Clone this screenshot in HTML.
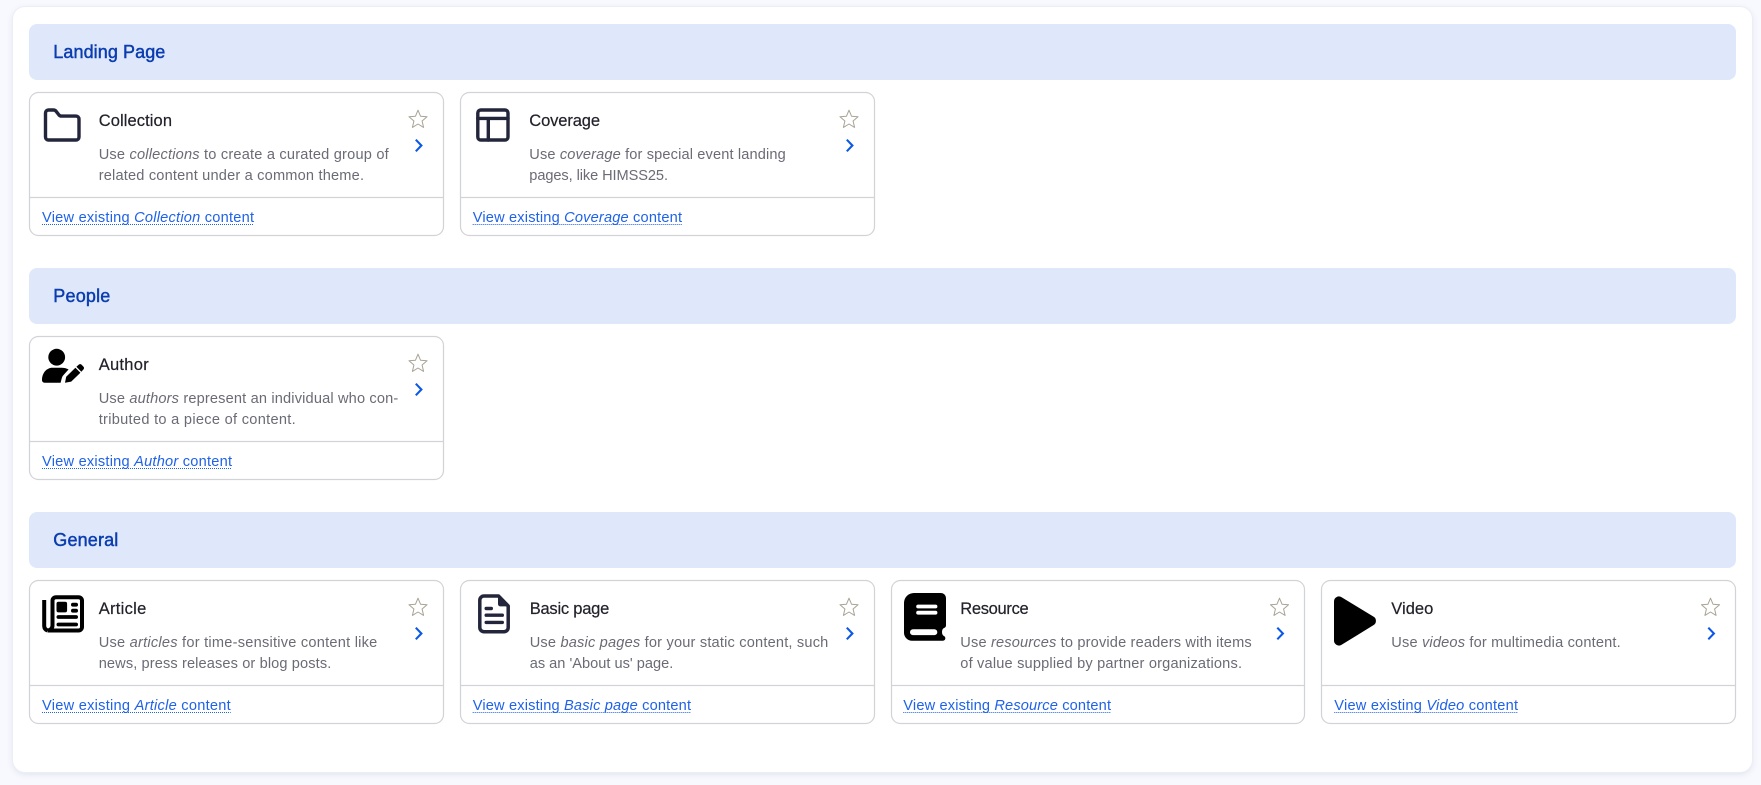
<!DOCTYPE html>
<html lang="en">
<head>
<meta charset="utf-8">
<title>Add content</title>
<style>
html,body{margin:0;padding:0;width:1761px;height:785px;overflow:hidden;background:#f7f9fe}
#panel{position:absolute;left:13px;top:7px;width:1738.5px;height:764.5px;background:#fff;border-radius:12px;box-shadow:0 0 0 1px #eceef6,0 2px 7px rgba(60,70,110,.13)}
svg{position:absolute;left:0;top:0;font-family:"Liberation Sans",sans-serif}
.h{font-size:18px;fill:#0b3db0;stroke:#0b3db0;stroke-width:.45px}
.t{font-size:16.5px;fill:#22222b;stroke:#22222b;stroke-width:.2px}
.d{font-size:14.6px;fill:#6b6b76}
.l{font-size:14.6px;fill:#1f62e8}
.u{stroke:#1f62e8;stroke-width:1;stroke-dasharray:1 1;fill:none}
.c{fill:#fff;stroke:#d2d3d7;stroke-width:1.2}
.s{stroke:#d2d3d7;stroke-width:1.2}
.b{fill:#dfe8fb}
.st{fill:none;stroke:#a8a395;stroke-width:1;stroke-linejoin:round}
.ch{fill:none;stroke:#0b57e8;stroke-width:2.1}
.ic{fill:none;stroke:#23263b;stroke-width:3.4;stroke-linecap:round;stroke-linejoin:round}
</style>
</head>
<body>
<div id="panel"></div>
<svg width="1761" height="785" viewBox="0 0 1761 785" xmlns="http://www.w3.org/2000/svg">
<defs>
<g id="act">
<polygon class="st" points="0,-9.5 2.53,-3.48 9.04,-2.94 4.09,1.33 5.58,7.69 0,4.3 -5.58,7.69 -4.09,1.33 -9.04,-2.94 -2.53,-3.48"/>
<path class="ch" d="M-2.2 20 L3.4 25.8 L-2.2 31.6"/>
</g>
</defs>

<!-- Section headers -->
<rect class="b" x="29" y="24" width="1707" height="56" rx="8"/>
<rect class="b" x="29" y="268" width="1707" height="56" rx="8"/>
<rect class="b" x="29" y="512" width="1707" height="56" rx="8"/>
<text class="h" x="53.3" y="58" textLength="112">Landing Page</text>
<text class="h" x="53.3" y="302" textLength="57">People</text>
<text class="h" x="53.3" y="546" textLength="65">General</text>

<!-- Card frames -->
<rect class="c" x="29.5" y="92.5" width="414" height="143" rx="9"/>
<line class="s" x1="30" x2="443" y1="197.5" y2="197.5"/>
<rect class="c" x="460.5" y="92.5" width="414" height="143" rx="9"/>
<line class="s" x1="461" x2="874" y1="197.5" y2="197.5"/>
<rect class="c" x="29.5" y="336.5" width="414" height="143" rx="9"/>
<line class="s" x1="30" x2="443" y1="441.5" y2="441.5"/>
<rect class="c" x="29.5" y="580.5" width="414" height="143" rx="9"/>
<line class="s" x1="30" x2="443" y1="685.5" y2="685.5"/>
<rect class="c" x="460.5" y="580.5" width="414" height="143" rx="9"/>
<line class="s" x1="461" x2="874" y1="685.5" y2="685.5"/>
<rect class="c" x="891.5" y="580.5" width="413" height="143" rx="9"/>
<line class="s" x1="892" x2="1304" y1="685.5" y2="685.5"/>
<rect class="c" x="1321.5" y="580.5" width="414" height="143" rx="9"/>
<line class="s" x1="1322" x2="1735" y1="685.5" y2="685.5"/>

<!-- Star and chevron -->
<use href="#act" x="418" y="119.7"/>
<use href="#act" x="849" y="119.7"/>
<use href="#act" x="418" y="363.7"/>
<use href="#act" x="418" y="607.7"/>
<use href="#act" x="849" y="607.7"/>
<use href="#act" x="1279.5" y="607.7"/>
<use href="#act" x="1710.5" y="607.7"/>

<!-- Icons -->
<path class="ic" d="M48.5 110 H53.5 a3.2 3.2 0 0 1 2.5 1.2 L59 115 a3.2 3.2 0 0 0 2.5 1.1 H76 a3 3 0 0 1 3 3 V137 a3 3 0 0 1-3 3 H48.5 a3 3 0 0 1-3-3 V113 a3 3 0 0 1 3-3z"/>
<rect class="ic" x="477.8" y="110" width="30.2" height="30" rx="3"/>
<path class="ic" d="M477.8 118.4 H508 M488.3 118.4 V140"/>

<circle cx="56.7" cy="357.2" r="8.4" fill="#000"/>
<path fill="#000" d="M42 380 c0-7 4.5-12.3 10.5-12.3 H61.5 c2.6 0 5 .6 7.1 1.7 L64 374.5 c-1.1 1.1-1.8 2.2-2.2 3.6 L60.6 382.7 H44.5 a2.5 2.5 0 0 1-2.5-2.7z"/>
<path fill="#000" d="M65 382.7 L66.2 376.8 L75.4 367.8 L80.4 372.8 L71.2 381.6z M76.4 366.8 l2.3-2 a2 2 0 0 1 2.9 0 l1.8 1.8 a2 2 0 0 1 0 2.9 l-2.1 2.2z"/>

<g fill="none" stroke="#000" stroke-width="4">
<path d="M47.5 630.5 H78.5 a3.5 3.5 0 0 0 3.5-3.5 V600.7 a3.5 3.5 0 0 0-3.5-3.5 H56 a3.5 3.5 0 0 0-3.5 3.5 V625.5 a5 5 0 0 1-5 5"/>
<path d="M44.2 600 V626 a5 5 0 0 0 3.3 4.5"/>
</g>
<rect x="56.5" y="601.8" width="10.6" height="10.6" rx="2" fill="#000"/>
<rect x="71" y="602.8" width="7" height="3.8" rx="1.9" fill="#000"/>
<rect x="71" y="608.8" width="7" height="3.8" rx="1.9" fill="#000"/>
<rect x="56.5" y="615.1" width="21.5" height="3.8" rx="1.9" fill="#000"/>
<rect x="56.5" y="622.6" width="21.5" height="3.8" rx="1.9" fill="#000"/>

<path class="ic" style="stroke-width:3.5" d="M484 596 H498.5 L508.2 606 V627.5 a4.2 4.2 0 0 1-4.2 4.2 H484 a4.2 4.2 0 0 1-4.2-4.2 V600.2 a4.2 4.2 0 0 1 4.2-4.2z"/>
<path fill="#23263b" d="M498 596 V604 a2.4 2.4 0 0 0 2.4 2.4 H508.4z"/>
<path class="ic" d="M486.2 608.5 H491.3 M486.2 615.2 H502.3 M486.2 622.4 H502.3"/>

<path fill="#000" d="M914 593 H941 a5 5 0 0 1 5 5 V625 a3 3 0 0 1-2 3 q-2 1-2 4 q0 3 2 4 a2.5 2.5 0 0 1-1 4.7 H912 a8 8 0 0 1-8-8 V603 a10 10 0 0 1 10-10z"/>
<rect x="916.2" y="604.6" width="21.2" height="3.8" rx="1.9" fill="#fff"/>
<rect x="916.2" y="610.8" width="21.2" height="3.8" rx="1.9" fill="#fff"/>
<rect x="910" y="629.3" width="27.3" height="5.8" rx="2.9" fill="#fff"/>

<path fill="#000" d="M1334 601.5 a5 5 0 0 1 7.6-4.3 L1373.3 616.5 a5 5 0 0 1 0 8.8 L1341.6 644.8 a5 5 0 0 1-7.6-4.3z"/>

<!-- Collection -->
<text class="t" x="98.7" y="126" textLength="73.3">Collection</text>
<text class="d" x="98.7" y="159" textLength="290">Use <tspan font-style="italic">collections</tspan> to create a curated group of</text>
<text class="d" x="98.7" y="180" textLength="265.3">related content under a common theme.</text>
<text class="l" x="42" y="222" textLength="212">View existing <tspan font-style="italic">Collection</tspan> content</text>
<line class="u" x1="42" x2="254" y1="224.5" y2="224.5"/>

<!-- Coverage -->
<text class="t" x="529.3" y="126" textLength="70.7">Coverage</text>
<text class="d" x="529.3" y="159" textLength="256.4">Use <tspan font-style="italic">coverage</tspan> for special event landing</text>
<text class="d" x="529.3" y="180" textLength="138.7">pages, like HIMSS25.</text>
<text class="l" x="472.7" y="222" textLength="209.3">View existing <tspan font-style="italic">Coverage</tspan> content</text>
<line class="u" x1="472.7" x2="682" y1="224.5" y2="224.5"/>

<!-- Author -->
<text class="t" x="98.7" y="370" textLength="50">Author</text>
<text class="d" x="98.7" y="403" textLength="299.6">Use <tspan font-style="italic">authors</tspan> represent an individual who con-</text>
<text class="d" x="98.7" y="424" textLength="197">tributed to a piece of content.</text>
<text class="l" x="42" y="466" textLength="190">View existing <tspan font-style="italic">Author</tspan> content</text>
<line class="u" x1="42" x2="232" y1="468.5" y2="468.5"/>

<!-- Article -->
<text class="t" x="98.7" y="614" textLength="47.6">Article</text>
<text class="d" x="98.7" y="647" textLength="278.6">Use <tspan font-style="italic">articles</tspan> for time-sensitive content like</text>
<text class="d" x="98.7" y="668" textLength="232.6">news, press releases or blog posts.</text>
<text class="l" x="42" y="710" textLength="188.7">View existing <tspan font-style="italic">Article</tspan> content</text>
<line class="u" x1="42" x2="230.7" y1="712.5" y2="712.5"/>

<!-- Basic page -->
<text class="t" x="529.7" y="614" textLength="79.6">Basic page</text>
<text class="d" x="529.7" y="647" textLength="298.6">Use <tspan font-style="italic">basic pages</tspan> for your static content, such</text>
<text class="d" x="529.7" y="668" textLength="143.6">as an 'About us' page.</text>
<text class="l" x="472.7" y="710" textLength="218.3">View existing <tspan font-style="italic">Basic page</tspan> content</text>
<line class="u" x1="472.7" x2="691" y1="712.5" y2="712.5"/>

<!-- Resource -->
<text class="t" x="960.3" y="614" textLength="68.4">Resource</text>
<text class="d" x="960.3" y="647" textLength="291.4">Use <tspan font-style="italic">resources</tspan> to provide readers with items</text>
<text class="d" x="960.3" y="668" textLength="281.7">of value supplied by partner organizations.</text>
<text class="l" x="903.3" y="710" textLength="207.7">View existing <tspan font-style="italic">Resource</tspan> content</text>
<line class="u" x1="903.3" x2="1111" y1="712.5" y2="712.5"/>

<!-- Video -->
<text class="t" x="1391.3" y="614" textLength="42">Video</text>
<text class="d" x="1391.3" y="647" textLength="229.4">Use <tspan font-style="italic">videos</tspan> for multimedia content.</text>
<text class="l" x="1334.3" y="710" textLength="183.7">View existing <tspan font-style="italic">Video</tspan> content</text>
<line class="u" x1="1334.3" x2="1518" y1="712.5" y2="712.5"/>
</svg>
</body>
</html>
